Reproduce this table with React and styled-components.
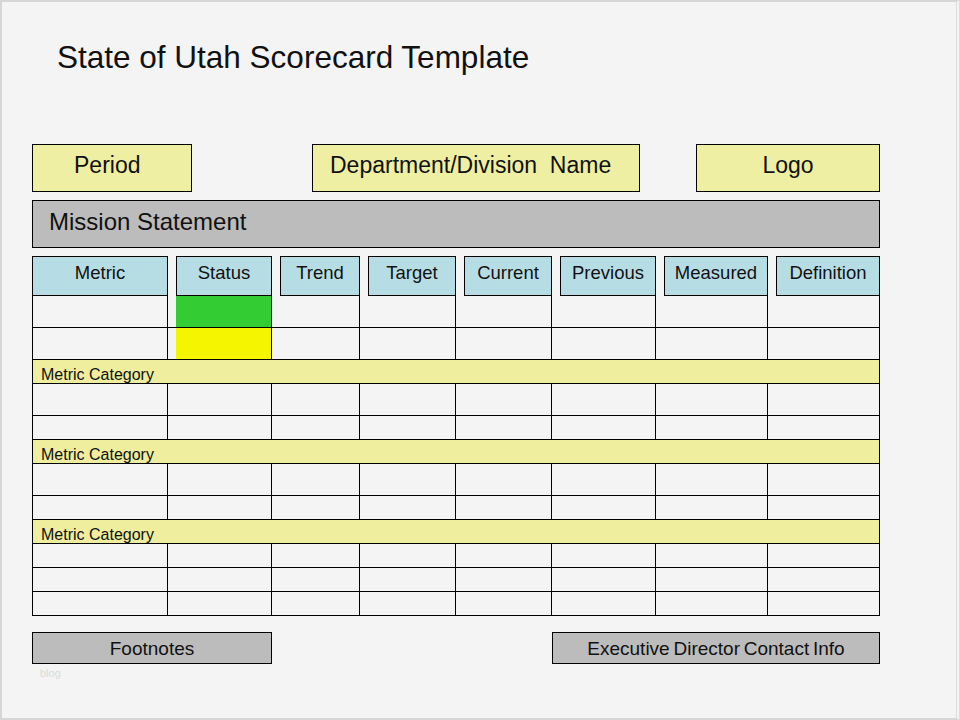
import React from "react";
import styled, { createGlobalStyle } from "styled-components";

const GlobalStyle = createGlobalStyle`
  html, body {
    margin: 0;
    padding: 0;
    background: #f4f4f4;
  }
  body {
    font-family: "Liberation Sans", Arial, sans-serif;
    color: #111;
  }
`;

const columns = "136px 104px 88px 96px 96px 104px 112px 112px";

const Slide = styled.div`
  box-sizing: border-box;
  width: 960px;
  height: 720px;
  background: #f4f4f4;
  border-top: 2px solid #d6d6d6;
  border-left: 2px solid #d6d6d6;
  border-bottom: 2px solid #d6d6d6;
  border-right: 4px double #dcdcdc;
  padding: 37px 0 0 30px;
`;

const Title = styled.h1`
  margin: 0 0 0 25px;
  font-size: 31.5px;
  line-height: 36px;
  font-weight: normal;
  color: #111;
  white-space: nowrap;
`;

const Sheet = styled.div`
  width: 848px;
  display: flex;
  flex-direction: column;
`;

const TopRow = styled.div`
  display: flex;
  margin-top: 69px;
  height: 48px;
`;

const InfoBox = styled.div`
  box-sizing: border-box;
  width: ${(p) => p.$width}px;
  margin-left: ${(p) => p.$offset || 0}px;
  height: 48px;
  background: #eeefa2;
  border: 1px solid #000;
  padding: 7px 0 0 ${(p) => p.$pad || 0}px;
  font-size: 23px;
  line-height: 26px;
  text-align: ${(p) => p.$align || "left"};
  white-space: pre;
`;

const Mission = styled.div`
  box-sizing: border-box;
  margin-top: 8px;
  height: 48px;
  background: #bcbcbc;
  border: 1px solid #000;
  padding: 7px 0 0 16px;
  font-size: 24px;
  line-height: 28px;
`;

const Grid = styled.div`
  display: grid;
  grid-template-columns: ${columns};
  height: ${(p) => p.$height}px;
`;

const HeaderRow = styled(Grid)`
  margin-top: 8px;
`;

const HeadCell = styled.div`
  box-sizing: border-box;
  margin-left: ${(p) => (p.$first ? 0 : 8)}px;
  background: #b7dde4;
  border: 1px solid #000;
  padding-top: 5px;
  font-size: 18.5px;
  line-height: 21px;
  text-align: center;
`;

const Cell = styled.div`
  box-sizing: border-box;
  border-right: 1px solid #000;
  border-bottom: 1px solid #000;
  border-left: ${(p) => (p.$first ? "1px solid #000" : "none")};
  background: ${(p) =>
    p.$fill ? `linear-gradient(to right, transparent 8px, ${p.$fill} 8px)` : "transparent"};
`;

const Category = styled.div`
  box-sizing: border-box;
  height: 24px;
  background: #eeee9e;
  border: 1px solid #000;
  border-top: none;
  padding: 6px 0 0 8px;
  font-size: 16px;
  line-height: 17px;
  overflow: hidden;
`;

const Footer = styled.div`
  display: flex;
  justify-content: space-between;
  margin-top: 16px;
`;

const FooterBox = styled.div`
  box-sizing: border-box;
  width: ${(p) => p.$width}px;
  height: 32px;
  background: #bcbcbc;
  border: 1px solid #000;
  padding-top: 1px;
  font-size: 19px;
  line-height: 30px;
  text-align: center;
  word-spacing: ${(p) => (p.$tight ? "-1.5px" : "0")};
`;

const Watermark = styled.div`
  margin: 3px 0 0 8px;
  font-size: 11px;
  line-height: 13px;
  color: #dadada;
`;

const headers = ["Metric", "Status", "Trend", "Target", "Current", "Previous", "Measured", "Definition"];

const sections = [
  { rows: [32, 32], status: ["#33cc33", "#f5f500"] },
  { category: "Metric Category", rows: [32, 24] },
  { category: "Metric Category", rows: [32, 24] },
  { category: "Metric Category", rows: [24, 24, 24] },
];

function BodyRow({ height, statusFill }) {
  return (
    <Grid $height={height}>
      {headers.map((h, i) => (
        <Cell key={h} $first={i === 0} $fill={i === 1 ? statusFill : undefined} />
      ))}
    </Grid>
  );
}

export default function App() {
  return (
    <>
      <GlobalStyle />
      <Slide>
        <Title>State of Utah Scorecard Template</Title>
        <Sheet>
          <TopRow>
            <InfoBox $width={160} $pad={41}>Period</InfoBox>
            <InfoBox $width={328} $offset={120} $pad={17}>{"Department/Division  Name"}</InfoBox>
            <InfoBox $width={184} $offset={56} $align="center">Logo</InfoBox>
          </TopRow>
          <Mission>Mission Statement</Mission>
          <HeaderRow $height={40}>
            {headers.map((h, i) => (
              <HeadCell key={h} $first={i === 0}>{h}</HeadCell>
            ))}
          </HeaderRow>
          {sections.map((s, si) => (
            <React.Fragment key={si}>
              {s.category && <Category>{s.category}</Category>}
              {s.rows.map((h, ri) => (
                <BodyRow key={ri} height={h} statusFill={s.status ? s.status[ri] : undefined} />
              ))}
            </React.Fragment>
          ))}
          <Footer>
            <FooterBox $width={240}>Footnotes</FooterBox>
            <FooterBox $width={328} $tight>Executive Director Contact Info</FooterBox>
          </Footer>
          <Watermark>blog</Watermark>
        </Sheet>
      </Slide>
    </>
  );
}
